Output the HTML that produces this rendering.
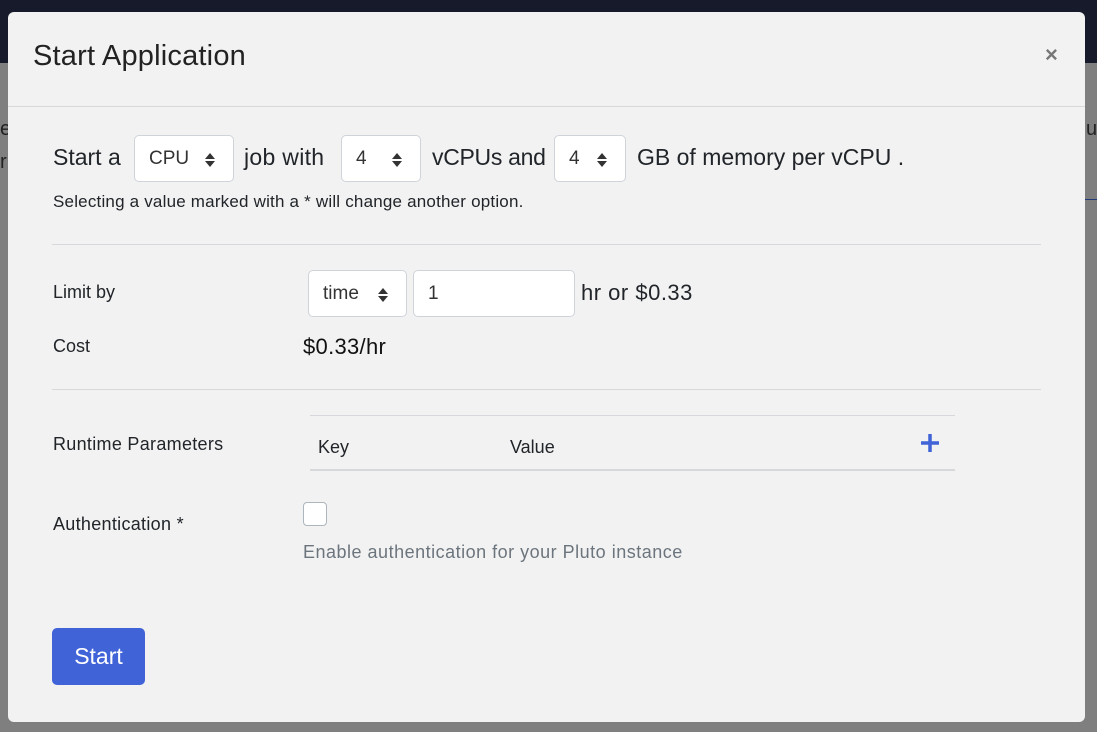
<!DOCTYPE html>
<html><head><meta charset="utf-8"><style>
body{margin:0;width:1097px;height:732px;overflow:hidden;background:#7f7f7f;font-family:"Liberation Sans",sans-serif;color:#212529;position:relative}
.top{position:absolute;left:0;top:0;width:1097px;height:63px;background:#161a2b}
.modal{position:absolute;left:8px;top:12px;width:1077px;height:710px;background:#f2f2f2;border-radius:6px}
.a{position:absolute;white-space:nowrap}
.sel{position:absolute;background:#fff;border:1px solid #ced4da;border-radius:5px;box-sizing:border-box;font-size:19px;color:#333}
.sel span{position:absolute;top:12px;left:14px}
.arr{position:absolute;right:18px;top:17px;width:10px;height:14px}
.hr{position:absolute;height:1px;background:#d6d8db}
</style></head><body>
<div class="top"></div>
<div class="a" style="left:0;top:118px;font-size:20px;color:#222">e</div>
<div class="a" style="left:0;top:151px;font-size:20px;color:#222">r</div>
<div class="a" style="left:1086px;top:118px;font-size:20px;color:#222">u</div>
<div style="position:absolute;left:1085px;top:199px;width:12px;height:1px;background:#233a7a"></div>
<div class="modal">
<div class="a" style="left:25px;top:28px;font-size:29px;color:#222;letter-spacing:0.2px">Start Application</div>
<div class="a" style="left:1037px;top:30px;font-size:22px;color:#777;font-weight:bold">×</div>
<div class="hr" style="left:0;top:94px;width:1077px"></div>
<div class="a" style="left:45px;top:132px;font-size:23px">Start a</div>
<div class="sel" style="left:126px;top:123px;width:100px;height:47px"><span>CPU</span><svg class="arr" viewBox="0 0 10 14"><path d="M5 0L10 6H0zM5 14L0 8H10z" fill="#333"/></svg></div>
<div class="a" style="left:236px;top:132px;font-size:23px;letter-spacing:0.3px">job with</div>
<div class="sel" style="left:333px;top:123px;width:80px;height:47px"><span>4</span><svg class="arr" viewBox="0 0 10 14"><path d="M5 0L10 6H0zM5 14L0 8H10z" fill="#333"/></svg></div>
<div class="a" style="left:424px;top:132px;font-size:23px;letter-spacing:-0.3px">vCPUs and</div>
<div class="sel" style="left:546px;top:123px;width:72px;height:47px"><span>4</span><svg class="arr" viewBox="0 0 10 14"><path d="M5 0L10 6H0zM5 14L0 8H10z" fill="#333"/></svg></div>
<div class="a" style="left:629px;top:132px;font-size:23px">GB of memory per vCPU .</div>
<div class="a" style="left:45px;top:180px;font-size:17px;letter-spacing:0.2px">Selecting a value marked with a * will change another option.</div>
<div class="hr" style="left:44px;top:232px;width:989px"></div>
<div class="a" style="left:45px;top:270px;font-size:18px">Limit by</div>
<div class="sel" style="left:300px;top:258px;width:99px;height:47px"><span>time</span><svg class="arr" viewBox="0 0 10 14"><path d="M5 0L10 6H0zM5 14L0 8H10z" fill="#333"/></svg></div>
<div class="sel" style="left:405px;top:258px;width:162px;height:47px"><span>1</span></div>
<div class="a" style="left:573px;top:268px;font-size:22px;letter-spacing:0.5px">hr or $0.33</div>
<div class="a" style="left:45px;top:324px;font-size:18px">Cost</div>
<div class="a" style="left:295px;top:322px;font-size:22px;color:#111;letter-spacing:0.3px">$0.33/hr</div>
<div class="hr" style="left:44px;top:377px;width:989px"></div>
<div class="hr" style="left:302px;top:403px;width:645px"></div>
<div class="a" style="left:45px;top:422px;font-size:18px;letter-spacing:0.3px">Runtime Parameters</div>
<div class="a" style="left:310px;top:425px;font-size:18px">Key</div>
<div class="a" style="left:502px;top:425px;font-size:18px">Value</div>
<svg style="position:absolute;left:912px;top:421px" width="20" height="20" viewBox="0 0 20 20"><path d="M10 1V19M1 10H19" stroke="#4063d8" stroke-width="3.5"/></svg>
<div class="hr" style="left:302px;top:457px;width:645px;height:2px"></div>
<div class="a" style="left:45px;top:502px;font-size:18px;letter-spacing:0.3px">Authentication *</div>
<div style="position:absolute;left:295px;top:490px;width:24px;height:24px;background:#fff;border:1px solid #adb5bd;border-radius:4px;box-sizing:border-box"></div>
<div class="a" style="left:295px;top:530px;font-size:18px;color:#6c757d;letter-spacing:0.5px">Enable authentication for your Pluto instance</div>
<div style="position:absolute;left:44px;top:616px;width:93px;height:57px;background:#4063d8;border-radius:5px;color:#fff;font-size:23px;line-height:57px;text-align:center">Start</div>
</div>
</body></html>
